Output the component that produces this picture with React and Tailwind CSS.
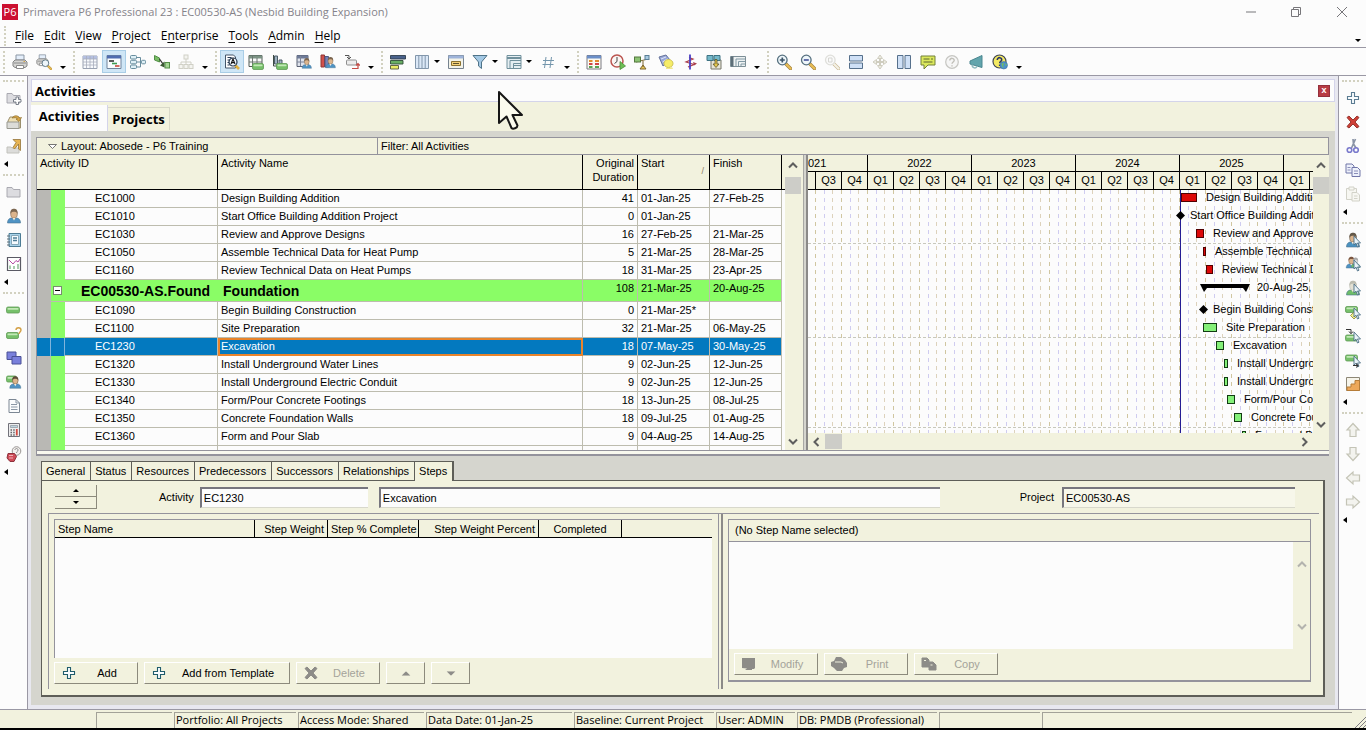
import React, { useState } from 'react';
import clsx from 'clsx';

// small drawing parts shared by several icons
const Head = ({ x = 0, body = '#4f93c4', hair = '#7b6650', skin = '#dcb48c' }) => (
  <g transform={`translate(${x} 0)`}>
    <path d="M1.5 15c0-3.5 2-5 4-5h5c2 0 4 1.500 4 5z" fill={body} stroke="#4a7490" strokeWidth=".6" />
    <ellipse cx="8" cy="6" rx="3.300" ry="4.200" fill={skin} stroke={hair} strokeWidth=".6" />
    <path d="M4.500 6C4 2 6 .8 8 .8S12 2 11.500 6C11 4 9 3.800 8 3.800S5 4 4.500 6z" fill={hair} />
    <path d="M6.500 10 8 12.500 9.500 10z" fill="#f4ead8" />
  </g>
);

const Glass = ({ color = '#56707f', handle = '#e9bd54', fill = '#eef6fa' }) => (
  <g>
    <path d="m10 10 4.500 4.500" stroke="#a08040" strokeWidth="3.400" strokeLinecap="round" />
    <path d="m10 10 4.500 4.500" stroke={handle} strokeWidth="2.200" strokeLinecap="round" />
    <circle cx="6.300" cy="6" r="4.800" fill={fill} stroke={color} strokeWidth="1.300" />
  </g>
);

const Pointer = () => (
  <path d="M9 4v9l2-1.800L12.500 15l1.500-.8-1.500-3.200h3z" fill="#e9f3f8" stroke="#4d6f86" strokeWidth=".9" />
);

const GreenBar = ({ x = 0, y = 6, w = 14 }) => (
  <g>
    <rect x={x + 0.5} y={y} width={w} height="6" rx="1.500" fill="#76c06a" stroke="#5f9a55" strokeWidth=".8" />
    <rect x={x + 1.500} y={y + 1} width={w - 2} height="1.800" rx=".8" fill="#c2e8b6" />
  </g>
);

const Folder = ({ fill = '#dcdce0', stroke = '#a3a3aa' }) => (
  <path d="M1 3.500h5l1.500 2H14V13H1z" fill={fill} stroke={stroke} strokeWidth=".9" />
);

const Printer = () => (
  <g>
    <path d="M4 1h8v5H4z" fill="#e4eefa" stroke="#8b97a5" />
    <path d="M3 6h10l2 2v4l-2 1.500H3L1 12V8z" fill="#d4d4d2" stroke="#858585" />
    <path d="M2 9h12" stroke="#8a8a8a" />
    <path d="M4.500 11.500h7v3h-7z" fill="#fff" stroke="#8a8a8a" />
    <path d="M11.500 7.500h1.500" stroke="#d9a94a" />
  </g>
);

const Plus = ({ stroke = '#5b7c92' }) => (
  <path d="M6.500 2.500h3v4h4v3h-4v4h-3v-4h-4v-3h4z" fill="#fafdff" stroke={stroke} strokeWidth="1.100" />
);

const Cross = ({ fill = '#cf4037', stroke = '#963630' }) => (
  <path d="M2 3.500 4 2l4 4 4-4 2 1.500L10 8l4 4.500L12 14l-4-4-4 4-2-1.500L6 8z" fill={fill} stroke={stroke} strokeWidth="1" />
);

const BigArrow = ({ turn }) => (
  <path transform={`rotate(${turn} 8 8)`} d="M8 1.500 14 8h-3v6.500H5V8H2z" fill="#f3f3ee" stroke="#c4c4b6" strokeWidth="1.200" />
);

const icons = {
  print: <Printer />,
  preview: (
    <g>
      <g transform="scale(.8)"><Printer /></g>
      <g transform="translate(5 5) scale(.7)"><Glass /></g>
    </g>
  ),
  table: (
    <g>
      <path d="M1 2h14v12.500H1z" fill="#f8fafd" stroke="#9aa2b2" />
      <path d="M1 2h14v3H1z" fill="#b4bfe0" />
      <path d="M1 5h14M1 8h14M1 11h14M4.500 2v12M8 2v12M11.500 2v12" stroke="#a8adbd" strokeWidth=".8" />
    </g>
  ),
  gantt: (
    <g>
      <path d="M1 1.500h14v13H1z" fill="#f9fcff" stroke="#70839c" />
      <path d="M1 1.500h14v3H1z" fill="#4f6cb0" />
      <path d="M3 7h5" stroke="#333" strokeWidth="1.600" />
      <path d="M6 9.500h5" stroke="#3f9b52" strokeWidth="1.600" />
      <path d="M9 12h4.500" stroke="#c8483c" strokeWidth="1.600" />
    </g>
  ),
  network: (
    <g fill="#dff0f6" stroke="#688d9e">
      <path d="M6 3.500h4.500V13H6M6 8h6" fill="none" />
      <rect x=".5" y="1.500" width="6" height="3.500" rx="1" />
      <rect x=".5" y="6.300" width="6" height="3.500" rx="1" />
      <rect x=".5" y="11" width="6" height="3.500" rx="1" />
      <rect x="11.500" y="6.300" width="4" height="3.500" rx="1" />
    </g>
  ),
  trace: (
    <g>
      <path d="M.5 1.500 5.500 4v4l-5-2z" fill="#79bd65" stroke="#538e47" />
      <rect x="11" y="8.500" width="4.500" height="5.500" fill="#a5d695" stroke="#538e47" />
      <path d="M5.500 5 9 10" fill="none" stroke="#333" strokeWidth="1.300" />
      <path d="M10.500 7.500v6l-4.500-2z" fill="#3b5a34" />
    </g>
  ),
  wbs: (
    <g fill="#f4f4f0" stroke="#d0d0c6">
      <path d="M8 4v7M3 11V8h10v3" fill="none" />
      <rect x="6" y="1" width="4" height="4" />
      <rect x="1" y="10.500" width="4" height="4" />
      <rect x="6" y="10.500" width="4" height="4" />
      <rect x="11" y="10.500" width="4" height="4" />
    </g>
  ),
  find: (
    <g>
      <path d="M1.500 1h8l2 2v11h-10z" fill="#fff" stroke="#44566a" />
      <path d="M3.500 3.500h4M3.500 6h2M3.500 8.500h1.500M3.500 11h2" stroke="#2b3f58" />
      <path d="m11 11 4 4" stroke="#e3b240" strokeWidth="2.600" />
      <circle cx="9" cy="8" r="4" fill="#f4faff" stroke="#24364c" strokeWidth="1.200" />
      <path d="m7 10 2-5 2 5M7.800 8.600h2.400" fill="none" stroke="#111" strokeWidth="1.100" />
    </g>
  ),
  gridBar: (
    <g>
      <path d="M1 1.500h13v11H1z" fill="#fafafa" stroke="#505a54" />
      <path d="M1 1.500h13v3H1z" fill="#7b9384" />
      <path d="M4.500 2v10M1 8h13M9 4v8" stroke="#6c7770" />
      <GreenBar x={4} y={9.500} w={11} />
    </g>
  ),
  histBar: (
    <g>
      <path d="M1.500 1v11h12" fill="none" stroke="#3d4b44" />
      <path d="M2.500 2h3v8h-3zM7 6h3v4H7z" fill="#9fb3c0" stroke="#4d5b66" />
      <GreenBar x={4} y={9.500} w={11} />
    </g>
  ),
  gridUser: (
    <g>
      <path d="M1 1.500h11v11H1z" fill="#dfe3ec" stroke="#5b6275" />
      <path d="M1 1.500h11v3H1z" fill="#6e7b98" />
      <path d="M4.500 2v10M1 8h11" stroke="#7c8499" />
      <g transform="translate(5 3.500) scale(.72)"><Head /></g>
    </g>
  ),
  histUser: (
    <g>
      <path d="M1 1h3.500v12H1z" fill="#d2504b" stroke="#8e3734" />
      <path d="M5 2.500h3.500V13H5z" fill="#7482b8" stroke="#4d5885" />
      <g transform="translate(4.500 2.500) scale(.75)"><Head /></g>
    </g>
  ),
  assign: (
    <g>
      <rect x="2.500" y="6" width="10" height="5" rx="1" fill="#ececec" stroke="#8f8f8f" />
      <path d="M1 1.500h4v3M3 3l2 2 2-2" fill="none" stroke="#555" />
      <path d="M8 14.500h6V10M12 11.500l2-2 2 2" fill="none" stroke="#c34a44" strokeWidth="1.200" />
    </g>
  ),
  bars: (
    <g strokeWidth=".9">
      <path d="M.5 1.500h15v3.500H.5z" fill="#49618b" stroke="#2f3d4c" />
      <path d="M.5 6.500h12.500V10H.5z" fill="#69ae63" stroke="#2f4c38" />
      <path d="M.5 11.500h8V15h-8z" fill="#eaec66" stroke="#55583a" />
    </g>
  ),
  columns: (
    <g>
      <path d="M1.500 1.500h13v13h-13z" fill="#dbe8f7" stroke="#8296ab" />
      <path d="M4.800 1.500v13M8 1.500v13M11.200 1.500v13" stroke="#8296ab" />
    </g>
  ),
  timescale: (
    <g>
      <path d="M.5 1.500h15v13H.5z" fill="#f3f3ea" stroke="#76838f" />
      <path d="M.5 1.500h15v3H.5z" fill="#9fb4da" />
      <path d="M3.500 7.500h9v4h-9z" fill="#f4d27a" stroke="#8a7130" />
      <path d="M5 9.500h6" stroke="#5c5130" />
    </g>
  ),
  filter: <path d="M1 1.500h14L9.500 8v6.500L6.500 12V8z" fill="#a3c8e4" stroke="#4f7388" />,
  group: (
    <g fill="#e5eef2" stroke="#70909c">
      <path d="M1 1.500h14v13H1z" />
      <path d="M1 4h14" strokeWidth="2" />
      <path d="M4 14V6.500h11M7.500 14V9.500H15M7.500 11.500H15" fill="none" />
    </g>
  ),
  hash: <path d="M6 3 4.500 14M11.500 3 10 14M3 6.500h11M2.500 10.500h11" fill="none" stroke="#7496ac" />,
  sheet: (
    <g>
      <path d="M1 1.500h14v13.500H1z" fill="#fbfaf2" stroke="#7a7a82" />
      <path d="M1 1.500h14v3H1z" fill="#6b8fc9" />
      <path d="M3 7h3.500M9 7h4" stroke="#e18c2d" strokeWidth="1.800" />
      <path d="M3 10h3.500M9 10h4" stroke="#cf4646" strokeWidth="1.800" />
      <path d="M3 13h3.500M9 13h4" stroke="#58a452" strokeWidth="1.800" />
    </g>
  ),
  schedule: (
    <g>
      <circle cx="7" cy="7" r="6" fill="#fbf6f4" stroke="#bb5550" strokeWidth="1.500" />
      <path d="M7 3v4.500l-2.500 2" fill="none" stroke="#444" />
      <path d="M10 7.500 15.500 12 10 15.500z" fill="#6dbe55" stroke="#4a8e3a" strokeWidth=".8" />
    </g>
  ),
  level: (
    <g>
      <path d="m2 8 12-3M9 7v6M6 15h6l-3-4z" fill="#e7c555" stroke="#7c6630" />
      <rect x=".5" y="3" width="6" height="5" fill="#8cc374" stroke="#54783f" />
      <rect x="11" y="1.500" width="4" height="4" fill="#a8cbe2" stroke="#5a7e96" />
    </g>
  ),
  spotlight: (
    <g>
      <path d="m1 3 7-2 4 5-7 6z" fill="#99a8d8" stroke="#66749c" />
      <path d="m3 5 5-2M4.500 8l5-3" stroke="#dde5f8" />
      <ellipse cx="10.500" cy="9.500" rx="4.500" ry="4" fill="#f6ed68" stroke="#cfc457" />
      <path d="M8 14.500h6M12 13l3 1.500" stroke="#f0e88c" />
    </g>
  ),
  progress: (
    <g fill="none">
      <path d="M7 3.500 11 5 4 8l8 2.500L6 13" stroke="#a93f4c" strokeWidth="1.200" />
      <path d="M8 .5v15" stroke="#4a3fc4" strokeWidth="1.800" />
      <path d="m11 8 4 1.500-3 2z" fill="#a93f4c" />
    </g>
  ),
  store: (
    <g>
      <path d="M5 6h10v9H5z" fill="#e8e6d8" stroke="#77766a" />
      <path d="M1 1.500h6v5H1zM8 1.500h6v5H8z" fill="#74b8c9" stroke="#3f7383" />
      <path d="M9 5.500h2V10h2l-3 3.500L7 10h2z" fill="#e3c74f" stroke="#5d5427" strokeWidth=".8" />
    </g>
  ),
  layout: (
    <g>
      <path d="M.5 2.500h15v10H.5z" fill="#edf1f2" stroke="#7c8e96" />
      <path d="M1 2.500h2.500v10H1z" fill="#5d6e78" />
      <path d="M6 12V5h9M8.500 12V7.500H15M11 12v-2h4" fill="none" stroke="#829aa5" />
    </g>
  ),
  zoomIn: (
    <g><Glass /><path d="M6.300 3.500v5M3.800 6h5" stroke="#3c5468" strokeWidth="1.700" /></g>
  ),
  zoomOut: (
    <g><Glass /><path d="M3.800 6h5" stroke="#4c5a9c" strokeWidth="1.700" /></g>
  ),
  zoomFit: (
    <g opacity=".55"><Glass color="#c8c8c0" handle="#efe9d4" fill="#fafafa" /><path d="M4.500 4h3.500v4H4.500z" fill="none" stroke="#b8b8b0" /></g>
  ),
  rowsSplit: (
    <g fill="#cfe0f6" stroke="#56708c"><path d="M1.500 1.500h13v5.500h-13z" /><path d="M1.500 9h13v5.500h-13z" /></g>
  ),
  center: (
    <g fill="#ecebe3" stroke="#cfcdbf">
      <path d="m8 1 2.500 3.500h-5zM8 15l2.500-3.500h-5zM1 8l3.500-2.500v5zM15 8l-3.500-2.500v5z" />
      <path d="M8 4.500v7M4.500 8h7" strokeWidth="2" />
    </g>
  ),
  colsSplit: (
    <g fill="#cfe0f6" stroke="#56708c"><path d="M1.500 1.500H7v13H1.500z" /><path d="M9 1.500h5.500v13H9z" /></g>
  ),
  note: (
    <g>
      <path d="M1 2h14v9H8l-4 4v-4H1z" fill="#dbe85c" stroke="#72803a" />
      <path d="M3.500 5h6M3.500 8h9M11 5h2" stroke="#5c6730" />
    </g>
  ),
  helpOff: (
    <g>
      <circle cx="8" cy="8" r="6.300" fill="#f6f6f6" stroke="#c6c6c2" strokeWidth="1.200" />
      <path d="M5.800 6.500c0-3 4.600-2.800 4.400 0C10 8 8 8 8 9.800M8 11.200v1.300" fill="none" stroke="#c0bfb8" strokeWidth="1.400" />
    </g>
  ),
  horn: (
    <g>
      <path d="M2 7 14 1.500v12L2 10z" fill="#62a5ad" stroke="#4b8790" />
      <path d="M4 10.500c0 4 4.500 4.500 5 1.500" fill="none" stroke="#8cb9be" strokeWidth="1.400" />
    </g>
  ),
  help: (
    <g>
      <circle cx="7.500" cy="7.500" r="6.500" fill="#f3e962" stroke="#3e4452" strokeWidth="1.200" />
      <path d="M5.300 6c0-3.200 4.600-3 4.400 0-.2 1.500-2 1.500-2 3.200M7.700 10.500V12" fill="none" stroke="#26346c" strokeWidth="1.600" />
      <circle cx="11.800" cy="11.300" r="3.700" fill="#4a90cf" stroke="#386a9e" strokeWidth=".6" />
      <path d="M9.500 10c2-2 3-1 2 .5s1 2-.5 3.500zM13.500 9l1.500 2-1.500 1z" fill="#73bd5c" />
    </g>
  ),
  folderAdd: (
    <g>
      <Folder />
      <path d="M10 7h2.500v2.500H15V12h-2.500v2.500H10V12H7.500V9.500H10z" fill="#fdfdfd" stroke="#6d7480" strokeWidth=".9" />
    </g>
  ),
  folderOpen: (
    <g>
      <path d="M2 7 4 3h9l1.500 3v8H2z" fill="#efe0b4" stroke="#9b8f6d" />
      <path d="M1 8h12v6.500H1z" fill="#dcdcd8" stroke="#98988f" />
      <path d="M6 4c2-3 6-3 7.500 0l2-.500-2.500 4L10 5h1.500c-.5-1.500-2.500-1.500-5.500-1z" fill="#d9a645" stroke="#8f7132" strokeWidth=".7" />
    </g>
  ),
  folderUp: (
    <g>
      <path d="M1 9h4l1 1h7v5H1z" fill="#dcdcda" stroke="#c2c2bc" />
      <path d="M7 1.500h7.500v11l-2-1.500V6l-4 5-1.500-1.500 3-5z" fill="#e7b453" stroke="#93743a" strokeWidth=".8" />
    </g>
  ),
  folder: <Folder />,
  user: <Head />,
  notebook: (
    <g>
      <path d="M3 1.500h11.500v13H3z" fill="#a8d3ea" stroke="#4d7c95" />
      <path d="M5.500 3.500h7v9h-7z" fill="#f6fbff" stroke="#88a8b9" />
      <path d="M7 6h4M7 8.500h4" stroke="#4f7e97" strokeWidth="1.300" />
      <path d="M1 4h3M1 7h3M1 10h3M1 13h3" stroke="#5d6f79" />
    </g>
  ),
  chart: (
    <g>
      <path d="M1.500 1.500h13v13h-13z" fill="#fff" stroke="#5a5a64" strokeWidth="1.200" />
      <path d="M4 13V9.500M8 13v-3M12 13V8" stroke="#6ea878" strokeWidth="1.200" />
      <path d="m3 4 4 4 3-3.500 2 1.500 2-3" fill="none" stroke="#b44ca4" />
    </g>
  ),
  bar: <GreenBar y={5} w={13} />,
  barLink: (
    <g>
      <GreenBar y={6.500} w={12} />
      <path d="M10 4c0-3 5-3 5 0 0 2-2 2-2 4" fill="none" stroke="#d39f45" strokeWidth="1.400" />
    </g>
  ),
  windows: (
    <g fill="#7a80dc" stroke="#4a5096">
      <path d="M1 2h9v7.500H1z" /><path d="M6 6.500h9V14H6z" />
    </g>
  ),
  barUser: (
    <g><GreenBar y={2} w={10} /><g transform="translate(2.500 1.500) scale(.85)"><Head hair="#5e4b38" /></g></g>
  ),
  doc: (
    <g>
      <path d="M3 1.500h7l3.500 3.500v9.500H3z" fill="#fbfcfd" stroke="#7c8794" />
      <path d="M10 1.500V5h3.500M5 6.500h6M5 9h6.500M5 11.500h6.500" fill="none" stroke="#8b97a5" />
    </g>
  ),
  calc: (
    <g>
      <path d="M2.500 1.500h11v13h-11z" fill="#ededee" stroke="#72727a" />
      <path d="M4.500 3.500h7v2h-7z" fill="#bfd3df" stroke="#7d8890" strokeWidth=".6" />
      <path d="M4.500 8h1.500M7.200 8h1.500M4.500 10.500h1.500M7.200 10.500h1.500M4.500 13h1.500M7.200 13h1.500" stroke="#666" strokeWidth="1.300" />
      <path d="M10.800 7v6.500" stroke="#d24c42" strokeWidth="1.800" />
    </g>
  ),
  risk: (
    <g>
      <circle cx="10.500" cy="5" r="4.300" fill="#f3f0ee" stroke="#9a9694" />
      <path d="M9 4c0-2 3-2 3 0s-1.500 1.200-1.500 3" fill="none" stroke="#8c8c8c" />
      <path d="M2 7.500h6.500l2 3L8 15.500H4l-3-3.500z" fill="#cf4b58" stroke="#8d323c" />
      <path d="M3 9.500h4M3 12h4" stroke="#f0b0b4" />
    </g>
  ),
  plus: <Plus />,
  cross: <Cross />,
  cut: (
    <g fill="none">
      <path d="m10.500 1-4 9M8 1l.5 5 2.500 4" stroke="#8a94a6" strokeWidth="1.700" />
      <circle cx="4.500" cy="12" r="2.300" stroke="#7a7acc" strokeWidth="1.600" />
      <circle cx="11" cy="12" r="2.300" stroke="#7a7acc" strokeWidth="1.600" />
    </g>
  ),
  copy: (
    <g fill="#eef1fb" stroke="#7176a8">
      <path d="M1 2h6l2 2v7H1z" /><path d="M7 5.500h5.500L15 8v6.500H7z" />
      <path d="M2.500 5.500h3M2.500 8h3M9 9h4M9 11.500h4" strokeWidth=".8" />
    </g>
  ),
  paste: (
    <g fill="#f7f7f2" stroke="#d2d2c8">
      <path d="M1.500 2.500h10v11h-10z" /><path d="M4 1h5v3H4z" /><path d="M7 6.500h5l2.500 2.500v6H7zM9 10h3.500M9 12.500h3.500" />
    </g>
  ),
  resource: <g><Head hair="#64594a" body="#4a92c0" /><Pointer /></g>,
  resources: (
    <g>
      <g transform="scale(.8)"><Head hair="#7a5640" /></g>
      <g transform="translate(5 1) scale(.7)"><Head body="#6ebd68" skin="#d8d8d8" hair="#a8a8a8" /></g>
      <Pointer />
    </g>
  ),
  role: <g><Head body="#6ebd68" skin="#e3e1d4" hair="#bcbcb0" /><Pointer /></g>,
  barStep: <g><GreenBar y={2.500} w={12} /><path d="m9 8 3.500 3.500L9 15l-3.500-3.500z" fill="#f3ee8c" stroke="#a39d4c" /><Pointer /></g>,
  predecessor: <g><GreenBar y={7} w={12} /><path d="M1 1.500h5v3.500M4 3.500l2 2.300 2-2.300" fill="none" stroke="#333" /><Pointer /></g>,
  successor: <g><GreenBar y={3} w={12} /><Pointer /><path d="M8 13.500h5M11 11.500l2.300 2-2.300 2" fill="none" stroke="#333" /></g>,
  steps: (
    <g>
      <path d="M1.500 1.500h13v13h-13z" fill="#f6f4ea" stroke="#8d8776" />
      <path d="M2 14.500V11h4V8h4V4.500h4.500v10z" fill="#eda85a" stroke="#b67c38" />
    </g>
  ),
  up: <BigArrow turn={0} />,
  down: <BigArrow turn={180} />,
  left: <BigArrow turn={270} />,
  right: <BigArrow turn={90} />,
  addDark: <Plus stroke="#205c6c" />,
  crossOff: <Cross fill="#8d8c88" stroke="#8d8c88" />,
  modifyOff: <path d="M1 2h13v10l-1 1h-2v1H4l2-1.500L1 12z" fill="#8d8c88" />,
  printOff: (
    <g><path d="M5 1h5l4 3 2 3v4l-3 1-2 3H6l-3-3-3-2V6l3-1z" fill="#8d8c88" /><path d="M4 6h6l2 1" fill="none" stroke="#f0f0de" /></g>
  ),
  copyOff: (
    <g fill="#8d8c88" stroke="#8d8c88"><path d="M1 2h5l2 2v7H1z" /><path d="M8 6h4l3 3v5H8z" /><path d="M3 4.500h2M9.500 9h2" stroke="#f0f0de" /></g>
  ),
};

function Icon({ name, className = 'w-4 h-4' }) {
  return <svg viewBox="0 0 16 16" className={clsx('block shrink-0', className)} aria-hidden="true">{icons[name]}</svg>;
}

const menus = ['File', 'Edit', 'View', 'Project', 'Enterprise', 'Tools', 'Admin', 'Help'];
const accel = { Enterprise: 1 };

// "+" at the end of a name gives the button its own drop-down arrow
const toolGroups = [
  ['print', 'preview'],
  ['table', 'gantt', 'network', 'trace', 'wbs'],
  ['find', 'gridBar', 'histBar', 'gridUser', 'histUser', 'assign'],
  ['bars', 'columns+', 'timescale', 'filter+', 'group+', 'hash'],
  ['sheet', 'schedule', 'level', 'spotlight', 'progress', 'store', 'layout'],
  ['zoomIn', 'zoomOut', 'zoomFit', 'rowsSplit', 'center', 'colsSplit', 'note', 'helpOff', 'horn', 'help'],
];
const pressed = ['gantt', 'find'];

const leftGroups = [
  ['folderAdd', 'folderOpen', 'folderUp'],
  ['folder', 'user', 'notebook', 'chart'],
  ['bar', 'barLink', 'windows', 'barUser', 'doc', 'calc', 'risk'],
];
const rightGroups = [
  ['plus', 'cross', 'cut', 'copy', 'paste'],
  ['resource', 'resources', 'role', 'barStep', 'predecessor', 'successor', 'steps'],
  ['up', 'down', 'left', 'right'],
];

const rows = [
  { id: 'EC1000', name: 'Design Building Addition', dur: 41, start: '01-Jan-25', finish: '27-Feb-25', x: 373, w: 16, label: 398, red: true },
  { id: 'EC1010', name: 'Start Office Building Addition Project', dur: 0, start: '01-Jan-25', finish: '', x: 372, label: 382 },
  { id: 'EC1030', name: 'Review and Approve Designs', dur: 16, start: '27-Feb-25', finish: '21-Mar-25', x: 388, w: 8, label: 405, red: true },
  { id: 'EC1050', name: 'Assemble Technical Data for Heat Pump', dur: 5, start: '21-Mar-25', finish: '28-Mar-25', x: 395, w: 3, label: 407, red: true },
  { id: 'EC1160', name: 'Review Technical Data on Heat Pumps', dur: 18, start: '31-Mar-25', finish: '23-Apr-25', x: 398, w: 7, label: 414, red: true },
  { id: 'EC00530-AS.Found', name: 'Foundation', dur: 108, start: '21-Mar-25', finish: '20-Aug-25', x: 392, w: 50, label: 449, group: true },
  { id: 'EC1090', name: 'Begin Building Construction', dur: 0, start: '21-Mar-25*', finish: '', x: 395, label: 405 },
  { id: 'EC1100', name: 'Site Preparation', dur: 32, start: '21-Mar-25', finish: '06-May-25', x: 395, w: 14, label: 418 },
  { id: 'EC1230', name: 'Excavation', dur: 18, start: '07-May-25', finish: '30-May-25', x: 408, w: 8, label: 425 },
  { id: 'EC1320', name: 'Install Underground Water Lines', dur: 9, start: '02-Jun-25', finish: '12-Jun-25', x: 416, w: 4, label: 429 },
  { id: 'EC1330', name: 'Install Underground Electric Conduit', dur: 9, start: '02-Jun-25', finish: '12-Jun-25', x: 416, w: 4, label: 429 },
  { id: 'EC1340', name: 'Form/Pour Concrete Footings', dur: 18, start: '13-Jun-25', finish: '08-Jul-25', x: 419, w: 8, label: 436 },
  { id: 'EC1350', name: 'Concrete Foundation Walls', dur: 18, start: '09-Jul-25', finish: '01-Aug-25', x: 426, w: 8, label: 443 },
  { id: 'EC1360', name: 'Form and Pour Slab', dur: 9, start: '04-Aug-25', finish: '14-Aug-25', x: 434, w: 4, label: 447 },
  { id: 'EC1370', name: 'Backfill and Compact Walls', dur: 4, start: '15-Aug-25', finish: '20-Aug-25', x: 440, w: 4, label: 455 },
];

const years = ['2022', '2023', '2024', '2025'];
const quarters = ['Q3', 'Q4', 'Q1', 'Q2', 'Q3', 'Q4', 'Q1', 'Q2', 'Q3', 'Q4', 'Q1', 'Q2', 'Q3', 'Q4', 'Q1', 'Q2', 'Q3', 'Q4', 'Q1'];
const detailTabs = ['General', 'Status', 'Resources', 'Predecessors', 'Successors', 'Relationships', 'Steps'];

const status = [
  ['', 'w-[76px] ml-24'],
  ['Portfolio: All Projects', 'w-[122px]'],
  ['Access Mode: Shared', 'w-[126px]'],
  ['Data Date: 01-Jan-25', 'w-[146px]'],
  ['Baseline: Current Project', 'w-[140px]'],
  ['User: ADMIN', 'w-[79px]'],
  ['DB: PMDB (Professional)', 'w-[140px]'],
  ['', 'w-[101px]'],
  ['', 'flex-1'],
];

function DownTick({ className }) {
  return <svg viewBox="0 0 6 3" className={clsx('w-[6px] h-[3px] block', className)}><path d="M0 0h6L3 3z" fill="currentColor" /></svg>;
}

function Chevron({ turn = 0, color = '#5e5e5e' }) {
  return (
    <svg viewBox="0 0 10 10" className="w-[10px] h-[10px] block">
      <path transform={`rotate(${turn} 5 5)`} d="m1 6.500 4-4 4 4" fill="none" stroke={color} strokeWidth="2" />
    </svg>
  );
}

function SideBar({ groups, side }) {
  return (
    <div className={clsx('w-7 shrink-0 bg-[#fcfcfc] flex flex-col', side === 'left' ? 'border-r border-[#9a98a4]' : 'border-l border-[#9a98a4]')}>
      {groups.map((group, i) => (
        <div key={i}>
          <div className="h-[10px] flex items-center px-[3px]"><div className="flex-1 border-t-2 border-dotted border-[#d2d1c0]"></div></div>
          {group.map((name) => (
            <button key={name} type="button" aria-label={name} className="w-full h-6 flex items-center justify-center"><Icon name={name} /></button>
          ))}
          <div className="h-3 flex items-center pl-1">
            <svg viewBox="0 0 4 6" className="w-1 h-[6px]"><path d="M4 0v6L0 3z" /></svg>
          </div>
        </div>
      ))}
    </div>
  );
}

function ScrollV({ thumb, dim, className }) {
  const color = dim ? '#b3b3ae' : '#5e5e5e';
  return (
    <div className={clsx('flex flex-col items-center justify-between bg-[#f2f2de]', className)}>
      <div className="w-full flex flex-col items-center">
        <div className="h-[22px] flex items-center"><Chevron color={color} /></div>
        {thumb && <div className="w-full h-[17px] bg-[#cdcdc8]"></div>}
      </div>
      <div className="h-[18px] flex items-center"><Chevron turn={180} color={color} /></div>
    </div>
  );
}

function ActivityTable() {
  const th = 'border-r border-b border-black px-[3px] pt-px align-top font-normal leading-[14px]';
  const td = 'border-r border-b border-[#bdbcae] px-[3px] pt-0 pb-[2px] whitespace-nowrap overflow-hidden';
  return (
    <table className="w-full table-fixed border-separate border-spacing-0 text-[11px] leading-[14px]">
      <colgroup>
        <col className="w-[14px]" />
        <col className="w-[14px]" />
        <col className="w-[153px]" />
        <col />
        <col className="w-[55px]" />
        <col className="w-[72px]" />
        <col className="w-[72px]" />
        <col className="w-[3px]" />
      </colgroup>
      <thead>
        <tr className="h-[35px] bg-[#f2f2de] text-left">
          <th colSpan="3" className={th}>Activity ID</th>
          <th className={th}>Activity Name</th>
          <th className={clsx(th, 'text-right')}>Original Duration</th>
          <th className={th}>
            <div className="flex justify-between"><span>Start</span><span className="pt-2 pr-[2px] text-[9px] text-[#8a7a60]">/</span></div>
          </th>
          <th className={th}>Finish</th>
          <th className="border-b border-black"></th>
        </tr>
      </thead>
      <tbody>
        {rows.map((r) => {
          const sel = r.id === 'EC1230';
          const cell = clsx(td, sel && 'bg-[#0379bf] text-white', r.group && 'bg-[#8afd66] align-top pt-px', !sel && !r.group && 'bg-[#fcfcfc]');
          return (
            <tr key={r.id} className={r.group ? 'h-[22px]' : 'h-[18px]'}>
              <td className={clsx('p-0', sel ? 'bg-[#0379bf] border-r border-[#7fb4dc]' : 'bg-[#b9b8b4]')}></td>
              {r.group ? (
                <td colSpan="2" className="p-0 bg-[#8afd66] border-b border-[#bdbcae]">
                  <div className="flex items-center">
                    <button type="button" aria-label="Collapse" className="ml-[2px] w-[9px] h-[9px] shrink-0 bg-white border border-[#7a8a70] flex items-center justify-center">
                      <span className="w-[5px] h-px bg-black"></span>
                    </button>
                    <span className="ml-[19px] text-[14px] leading-5 font-bold whitespace-nowrap">{r.id}</span>
                  </div>
                </td>
              ) : (
                <>
                  <td className={clsx('p-0', sel ? 'bg-[#0379bf] border-r border-[#7fb4dc]' : 'bg-[#8afd66]')}></td>
                  <td className={clsx(cell, 'pl-[30px]')}>{r.id}</td>
                </>
              )}
              {r.group ? (
                <td className="p-0 pl-[5px] bg-[#8afd66] border-b border-r border-[#bdbcae] text-[14px] leading-5 font-bold">{r.name}</td>
              ) : (
                <td className={clsx(cell, sel && 'outline-2 -outline-offset-2 outline-[#e8842c]')}>{r.name}</td>
              )}
              <td className={clsx(cell, 'text-right')}>{r.dur}</td>
              <td className={cell}>{r.start}</td>
              <td className={cell}>{r.finish}</td>
              <td className="bg-[#fcfcfc]"></td>
            </tr>
          );
        })}
      </tbody>
    </table>
  );
}

function GanttChart() {
  let y = 0;
  const placed = rows.map((r) => {
    const top = y;
    y += r.group ? 22 : 18;
    return { ...r, top };
  });
  return (
    <svg className="block w-full h-full bg-[#fcfcfc] text-[11px]">
      {Array.from({ length: 140 }, (_, i) => (
        <path key={i} d={`M${Math.round(7 + i * 8.67) + 0.5} 0V300`} strokeDasharray="4 4" stroke={i % 3 === 0 ? '#d0c6a0' : i % 3 === 1 ? '#cfccf0' : '#ddd2bc'} />
      ))}
      {[53.5, 147.5, 237.5].map((ly) => (
        <path key={ly} d={`M0 ${ly}H2000`} strokeDasharray="3 2" stroke="#c8c8bc" />
      ))}
      <path d="M372.500 0V300" stroke="#241c94" />
      {placed.map((r) => (
        <g key={r.id}>
          {r.group && <path d={`M${r.x} ${r.top + 4}h${r.w}l-4 8-3-4h-${r.w - 14}l-3 4z`} fill="#000" />}
          {!r.group && r.w && (
            <rect x={r.x + 0.5} y={r.top + 3.500} width={r.w - 1} height="8" fill={r.red ? '#dc0808' : '#84f078'} stroke={r.red ? '#500000' : '#123c12'} />
          )}
          {!r.w && <path d={`M${r.x + 0.5} ${r.top + 3}l4.500 4.500-4.500 4.500-4.500-4.500z`} />}
          <text x={r.label} y={r.top + 11}>{r.group ? '20-Aug-25, Foundation' : r.name}</text>
        </g>
      ))}
    </svg>
  );
}

function Gantt() {
  return (
    <div className="flex-1 min-w-0 flex flex-col border-l-2 border-[#8b8a88]">
      <div className="flex-1 min-h-0 flex">
        <div className="flex-1 min-w-0 flex flex-col">
          <div className="h-[35px] shrink-0 overflow-hidden bg-[#f2f2de] border-b border-black text-[11px] leading-4">
            <div className="flex h-[17px] border-b border-black">
              <div className="w-[60px] shrink-0 border-r border-black">021</div>
              {years.map((yr) => <div key={yr} className="w-[104px] shrink-0 border-r border-black text-center">{yr}</div>)}
            </div>
            <div className="flex h-[17px]">
              <div className="w-2 shrink-0 border-r border-black"></div>
              {quarters.map((q, i) => <div key={i} className="w-[26px] shrink-0 border-r border-black text-center">{q}</div>)}
            </div>
          </div>
          <div className="flex-1 min-h-0"><GanttChart /></div>
        </div>
        <ScrollV thumb className="w-4 shrink-0" />
      </div>
      <div className="h-[17px] shrink-0 bg-[#f2f2de] flex items-center justify-between pl-1 pr-5">
        <div className="flex items-center gap-[3px] h-full"><Chevron turn={270} /><div className="w-[17px] h-[15px] bg-[#cdcdc8]"></div></div>
        <Chevron turn={90} />
      </div>
    </div>
  );
}

function PushButton({ icon, children, disabled, className }) {
  return (
    <button
      type="button"
      disabled={disabled}
      className={clsx('h-[22px] shrink-0 flex items-center pl-[6px] border border-t-white border-l-white border-r-[#8c8a7c] border-b-[#8c8a7c] text-[11px]', disabled ? 'text-[#a4a39a]' : 'text-black', className)}
    >
      {icon && <Icon name={icon} />}
      <span className="flex-1 text-center">{children}</span>
    </button>
  );
}

function StepsTab() {
  const th = 'border-r border-b border-black px-[3px] font-normal whitespace-nowrap';
  const field = 'h-[21px] px-[2px] text-[11px] border-t-2 border-l-2 border-t-[#77767e] border-l-[#77767e] border-b border-b-[#d8d8cc] outline-none';
  return (
    <div className="flex-1 min-h-0 flex flex-col bg-[#f2f2de] border-l border-r-2 border-b-2 border-[#5e5e58] pt-1 pl-[6px] pr-1 pb-[6px]">
      <div className="flex items-center text-[11px] pl-[7px] pr-6">
        <div className="w-[42px] h-6 flex flex-col border-r border-b border-[#8c8a7c]">
          <button type="button" aria-label="Previous activity" className="flex-1 flex items-center justify-center border-b border-[#8c8a7c]"><DownTick className="rotate-180" /></button>
          <button type="button" aria-label="Next activity" className="flex-1 flex items-center justify-center"><DownTick /></button>
        </div>
        <label htmlFor="activity" className="ml-[62px] mr-[6px]">Activity</label>
        <input id="activity" defaultValue="EC1230" className={clsx(field, 'w-[168px] bg-[#fcfcfc]')} />
        <input aria-label="Activity name" defaultValue="Excavation" className={clsx(field, 'ml-[11px] mr-20 flex-1 min-w-0 bg-[#fcfcfc]')} />
        <label htmlFor="project" className="mr-2">Project</label>
        <input id="project" readOnly value="EC00530-AS" className={clsx(field, 'w-[233px] bg-[#f7f7ea]')} />
      </div>
      <div className="flex-1 min-h-0 flex mt-1 border-t border-l border-[#94939c]">
        <div className="w-[670px] shrink-0 flex flex-col pt-[5px] pl-[5px] pr-[6px] border-r border-[#94939c]">
          <div className="flex-1 min-h-0 bg-[#fcfcfc] border-t border-l border-[#94939c]">
            <table className="w-full table-fixed border-separate border-spacing-0 text-[11px] leading-4 bg-[#f2f2de]">
              <colgroup>
                <col className="w-[200px]" />
                <col className="w-[73px]" />
                <col className="w-[91px]" />
                <col className="w-[120px]" />
                <col className="w-[83px]" />
                <col />
              </colgroup>
              <thead>
                <tr className="h-[18px]">
                  <th className={clsx(th, 'text-left')}>Step Name</th>
                  <th className={clsx(th, 'text-right')}>Step Weight</th>
                  <th className={clsx(th, 'text-right')}>Step % Complete</th>
                  <th className={clsx(th, 'text-right')}>Step Weight Percent</th>
                  <th className={clsx(th, 'text-center')}>Completed</th>
                  <th className="border-b border-black"></th>
                </tr>
              </thead>
            </table>
          </div>
          <div className="flex gap-[6px] pt-1 pb-[5px]">
            <PushButton icon="addDark" className="w-[84px]">Add</PushButton>
            <PushButton icon="addDark" className="w-[146px]">Add from Template</PushButton>
            <PushButton icon="crossOff" disabled className="w-[84px]">Delete</PushButton>
            <PushButton disabled className="w-[39px] pr-[6px]"><DownTick className="rotate-180 mx-auto scale-150 text-[#8d8c88]" /></PushButton>
            <PushButton disabled className="w-[39px] pr-[6px]"><DownTick className="mx-auto scale-150 text-[#8d8c88]" /></PushButton>
          </div>
        </div>
        <div className="flex-1 min-w-0 flex ml-[2px] border-l-2 border-[#8b8a88] pt-[5px] pl-[5px] pr-2 pb-[7px]">
          <div className="flex-1 flex flex-col border border-b-2 border-[#94939c]">
            <div className="h-[22px] flex items-center pl-[6px] text-[11px] border-b border-[#94939c]">(No Step Name selected)</div>
            <div className="flex-1 min-h-0 flex bg-[#fcfcfc]">
              <div className="flex-1"></div>
              <ScrollV dim className="w-[17px] pt-3 pb-[14px]" />
            </div>
            <div className="flex gap-[6px] pt-1 pb-[5px] pl-[5px]">
              <PushButton icon="modifyOff" disabled className="w-[84px]">Modify</PushButton>
              <PushButton icon="printOff" disabled className="w-[84px]">Print</PushButton>
              <PushButton icon="copyOff" disabled className="w-[84px]">Copy</PushButton>
            </div>
          </div>
        </div>
      </div>
    </div>
  );
}

export default function App() {
  const [tab, setTab] = useState('Steps');

  return (
    <div className="relative h-screen flex flex-col overflow-hidden bg-[#fcfcfc] text-black font-['Liberation_Sans',sans-serif]">
      {/* Title bar */}
      <header className="h-6 shrink-0 flex items-center pl-[2px] font-['Open_Sans',sans-serif]">
        <span className="w-4 h-4 bg-[#cc1030] text-white text-[11px] leading-4 text-center">P6</span>
        <h1 className="ml-[5px] flex-1 text-[11px] text-[#85838a]">Primavera P6 Professional 23 : EC00530-AS (Nesbid Building Expansion)</h1>
        <div className="flex text-[#77767a]">
          <button type="button" aria-label="Minimize" className="w-[45px] flex justify-center"><svg viewBox="0 0 12 12" className="w-3 h-3"><path d="M1 6h10" stroke="currentColor" /></svg></button>
          <button type="button" aria-label="Restore" className="w-[45px] flex justify-center"><svg viewBox="0 0 12 12" className="w-3 h-3"><path d="M1.500 3.500h7v7h-7zM3.500 3.500v-2h7v7h-2" fill="none" stroke="currentColor" /></svg></button>
          <button type="button" aria-label="Close" className="w-12 flex justify-center"><svg viewBox="0 0 12 12" className="w-3 h-3"><path d="m1 1 10 10M11 1 1 11" stroke="currentColor" /></svg></button>
        </div>
      </header>

      {/* Menu */}
      <nav className="h-6 shrink-0 flex items-center justify-between border-b border-[#9a98a4] pl-1 pr-[5px] font-['Open_Sans',sans-serif] text-[12px]">
        <div className="flex items-center">
          <span className="h-5 border-l-2 border-dotted border-[#d2d1c0]"></span>
          <div className="flex gap-[10px] pl-[9px]">
            {menus.map((m) => {
              const k = accel[m] || 0;
              return <button key={m} type="button">{m.slice(0, k)}<u className="underline-offset-2">{m[k]}</u>{m.slice(k + 1)}</button>;
            })}
          </div>
        </div>
        <DownTick className="mt-[10px]" />
      </nav>

      {/* Toolbar */}
      <div className="h-7 shrink-0 flex items-center border-b border-[#9a98a4]">
        {toolGroups.map((group, i) => (
          <div key={i} className="flex items-center">
            <div className="w-2 h-[22px] flex justify-center"><span className="border-l-2 border-dotted border-[#d2d1c0]"></span></div>
            {group.map((item) => {
              const name = item.replace('+', '');
              return (
                <button
                  key={name}
                  type="button"
                  aria-label={name}
                  className={clsx('h-[23px] flex items-center', item === name ? 'w-6 justify-center' : 'w-[34px] pl-1 gap-1', pressed.includes(name) && 'bg-[#cfe6f6] border border-[#a9cde6]')}
                >
                  <Icon name={name} />
                  {item !== name && <DownTick />}
                </button>
              );
            })}
            <div className="w-[14px] pt-3 flex justify-center"><DownTick /></div>
          </div>
        ))}
      </div>

      <div className="flex-1 min-h-0 flex">
        <SideBar groups={leftGroups} side="left" />

        <main className="flex-1 min-w-0 flex flex-col bg-[#e8e8f0] pt-[3px] px-[3px] pb-1">
          <div className="h-[23px] shrink-0 flex items-center justify-between bg-[#fcfcfc] border border-[#d4d4ea] pl-[3px] pr-1">
            <h2 className="font-['Open_Sans',sans-serif] font-bold text-[13px] leading-5">Activities</h2>
            <button type="button" aria-label="Close view" className="w-3 h-3 bg-[#b83c44] border border-[#94303c] text-white text-[9px] leading-[9px] font-bold">x</button>
          </div>

          {/* View tabs */}
          <div className="h-[29px] shrink-0 flex pt-[3px] bg-[#f2f2de] font-['Open_Sans',sans-serif] font-bold text-[13px] leading-5">
            <button type="button" className="w-[77px] bg-[#fcfcfc] border-r border-[#d4d4ea] pb-1">Activities</button>
            <button type="button" className="w-[62px] h-[23px] mt-[2px] border-t border-r border-[#d8d8c8]">Projects</button>
          </div>

          <div className="flex-1 min-h-0 flex flex-col bg-[#d5d5ce] pt-[6px] pl-[5px] pr-[6px] pb-[3px]">
            <div className="h-[319px] shrink-0 flex flex-col border-l border-t border-[#94939c]">
              <div className="h-[17px] shrink-0 flex items-center bg-[#f2f2de] border-b border-r border-[#94939c] text-[11px]">
                <button type="button" className="w-[341px] h-full flex items-center gap-1 pl-[11px] border-r border-[#94939c]">
                  <svg viewBox="0 0 9 5" className="w-[9px] h-[5px]"><path d="M.5.5h8l-4 4z" fill="#fff" stroke="#555" strokeWidth=".8" /></svg>
                  Layout: Abosede - P6 Training
                </button>
                <span className="pl-[3px]">Filter: All Activities</span>
              </div>
              <div className="flex-1 min-h-0 flex border-b border-[#94939c]">
                <div className="w-[767px] shrink-0 flex overflow-hidden border-r border-[#a8a8a4] mr-[2px]">
                  <div className="flex-1 min-w-0 overflow-hidden"><ActivityTable /></div>
                  <ScrollV thumb className="w-[18px] shrink-0 pr-[2px]" />
                </div>
                <Gantt />
              </div>
              <div className="h-[5px] shrink-0 bg-[#f8f8ee] border-b-2 border-[#94939c]"></div>
            </div>

            {/* Activity details */}
            <div className="flex-1 min-h-0 flex flex-col mt-[5px] ml-[5px] mr-1 mb-[5px]">
              <div className="h-5 shrink-0 flex text-[11px]">
                <div className="flex bg-[#f2f2de] border-t border-l border-[#5e5e58]">
                  {detailTabs.map((t) => (
                    <button
                      key={t}
                      type="button"
                      onClick={() => setTab(t)}
                      className={clsx('pl-1 pr-[5px] border-r border-[#5e5e58]', t === tab ? 'border-r-2' : 'border-b')}
                    >
                      {t}
                    </button>
                  ))}
                </div>
                <div className="flex-1 border-b border-[#5e5e58]"></div>
              </div>
              <StepsTab />
            </div>
          </div>
        </main>

        <SideBar groups={rightGroups} side="right" />
      </div>

      {/* Status bar */}
      <footer className="h-[21px] shrink-0 flex gap-[2px] bg-[#f2f2de] border-t border-[#9a98a4] border-b-2 border-b-black pt-[2px] font-['Open_Sans',sans-serif] text-[11px] leading-[14px]">
        {status.map(([text, width], i) => (
          <div key={i} className={clsx('shrink-0 border-t border-l border-[#a3a298] pl-px whitespace-nowrap', width)}>{text}</div>
        ))}
        <svg viewBox="0 0 12 12" className="w-3 h-3 self-end shrink-0"><path d="M1 12 12 1M5 12l7-7M9 12l3-3" stroke="#7e7c84" /></svg>
      </footer>

      {/* Mouse pointer */}
      <svg viewBox="0 0 26 40" className="absolute left-[497px] top-[90px] w-[26px] h-10 pointer-events-none">
        <path d="M2 2v31l7.500-6.500 5 11.500c1.500 1.500 6 0 6-2.500l-5-10.500H25z" fill="#fbfbee" stroke="#161616" strokeWidth="2" strokeLinejoin="round" />
      </svg>
    </div>
  );
}
